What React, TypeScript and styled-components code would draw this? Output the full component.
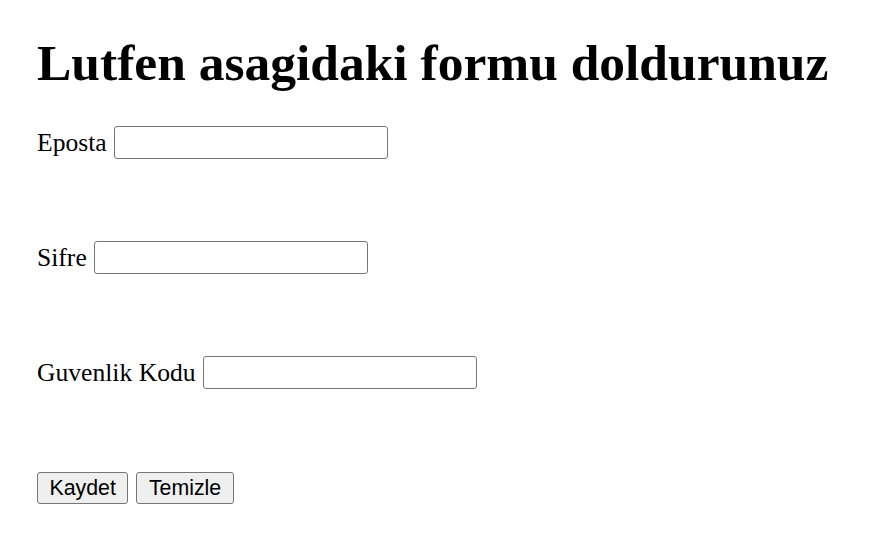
import styled, { createGlobalStyle } from "styled-components";

const GlobalStyle = createGlobalStyle`
  html, body {
    margin: 0;
    padding: 0;
    background: #ffffff;
  }
`;

const Page = styled.div`
  padding: 34px 37px 0;
  font-family: "Liberation Serif", "Times New Roman", serif;
  color: #000;
`;

const Title = styled.h1`
  font-size: 51.5px;
  font-weight: bold;
  line-height: 57px;
  margin: 0 0 35px;
`;

const Form = styled.form`
  display: flex;
  flex-direction: column;
  gap: 82px;
`;

const Row = styled.div`
  display: flex;
  align-items: center;
  height: 33px;
  font-size: 25.6px;
`;

const Label = styled.label`
  margin-right: 7px;
`;

const Field = styled.input`
  box-sizing: border-box;
  width: 274px;
  height: 33px;
  margin: 0;
  border: 1px solid #767676;
  border-radius: 3px;
  background: #fff;
  font-size: 21px;
`;

const Buttons = styled.div`
  display: flex;
  gap: 8px;
  margin-top: 1px;
`;

const Button = styled.button`
  box-sizing: border-box;
  height: 32px;
  margin: 0;
  padding: 0 11.5px;
  border: 1px solid #767676;
  border-radius: 3px;
  background: #efefef;
  color: #000;
  font-family: "Liberation Sans", Arial, sans-serif;
  font-size: 21.33px;
`;

export default function App() {
  return (
    <Page>
      <GlobalStyle />
      <Title>Lutfen asagidaki formu doldurunuz</Title>
      <Form onSubmit={(e) => e.preventDefault()}>
        <Row>
          <Label>Eposta</Label>
          <Field type="email" />
        </Row>
        <Row>
          <Label>Sifre</Label>
          <Field type="password" />
        </Row>
        <Row>
          <Label>Guvenlik Kodu</Label>
          <Field type="text" />
        </Row>
        <Buttons>
          <Button type="submit">Kaydet</Button>
          <Button type="reset">Temizle</Button>
        </Buttons>
      </Form>
    </Page>
  );
}
